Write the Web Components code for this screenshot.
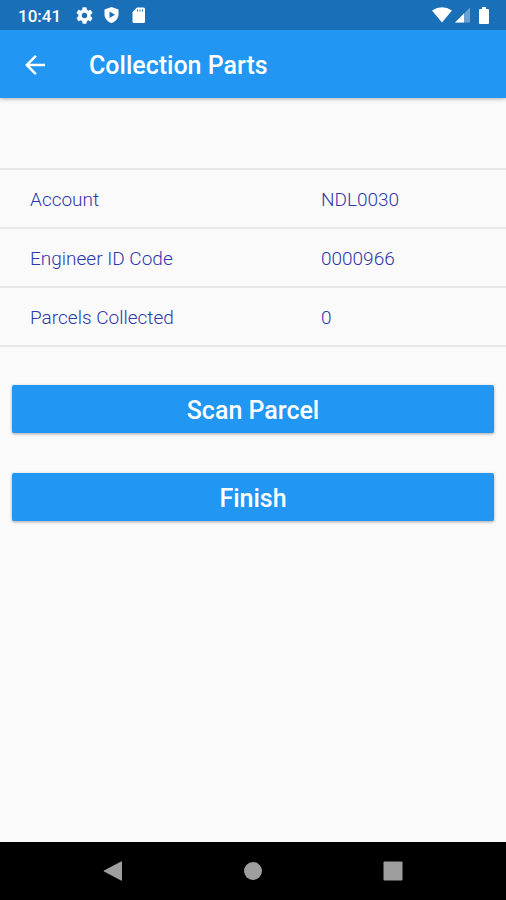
<!DOCTYPE html>
<html lang="en">
<head>
<meta charset="utf-8">
<meta name="viewport" content="width=device-width, initial-scale=1">
<title>Collection Parts</title>
<style>
  html, body { margin: 0; height: 100%; }
  body { font-family: Roboto, "Liberation Sans", sans-serif; background: #fafafa; }
</style>
</head>
<body>
<phone-screen>
  <status-bar slot="top">10:41</status-bar>
  <app-bar slot="top">Collection Parts</app-bar>
  <info-table>
    <span slot="account">NDL0030</span>
    <span slot="engineer">0000966</span>
    <span slot="parcels">0</span>
  </info-table>
  <action-list>
    <action-button>Scan Parcel</action-button>
    <action-button>Finish</action-button>
  </action-list>
  <nav-bar slot="bottom"></nav-bar>
</phone-screen>

<script>
const define = (name, html) => customElements.define(name, class extends HTMLElement {
  constructor() {
    super();
    this.attachShadow({ mode: "open" }).innerHTML = html;
  }
});

define("phone-screen", `
  <style>
    :host { display: flex; flex-direction: column; min-height: 100vh; background: #fafafa; }
    header { position: relative; box-shadow: 0 1px 4px rgba(0,0,0,.3); }
    main { flex: 1; padding-top: 70px; }
  </style>
  <header><slot name="top"></slot></header>
  <main><slot></slot></main>
  <slot name="bottom"></slot>`);

define("status-bar", `
  <style>
    :host { display: flex; align-items: center; justify-content: space-between; height: 30px;
      padding: 0 16px 0 18px; background: #1a70b8; color: #fff; font-size: 17px; font-weight: 500; line-height: 30px; }
    div { display: flex; align-items: center; }
    .left { gap: 10px; }
    .left time { margin-right: 5px; padding-top: 2px; }
    .right { gap: 3px; }
    svg { display: block; fill: currentColor; }
    .battery { margin-left: 4px; }
  </style>
  <div class="left">
    <time><slot></slot></time>
    <svg width="17" height="17" viewBox="2 2 20 20" aria-hidden="true"><path d="M19.14 12.94c.04-.3.06-.61.06-.94s-.02-.64-.07-.94l2.03-1.58a.49.49 0 0 0 .12-.61l-1.92-3.32a.49.49 0 0 0-.59-.22l-2.39.96c-.5-.38-1.03-.7-1.62-.94l-.36-2.54A.48.48 0 0 0 13.92 2.400h-3.84c-.24 0-.43.17-.47.41l-.36 2.54c-.59.24-1.13.57-1.62.94l-2.39-.96a.48.48 0 0 0-.59.22L2.740 8.870a.48.48 0 0 0 .12.61l2.03 1.58c-.05.3-.09.63-.09.94s.02.64.07.94l-2.03 1.58a.49.49 0 0 0-.12.61l1.920 3.320c.12.22.37.29.59.22l2.390-.96c.5.38 1.030.7 1.620.94l.36 2.540c.05.24.24.41.48.41h3.840c.24 0 .44-.17.47-.41l.36-2.540c.59-.24 1.130-.56 1.620-.94l2.390.96c.22.08.47 0 .59-.22l1.920-3.320a.48.48 0 0 0-.12-.61zM12 15.200a3.200 3.200 0 1 1 0-6.400 3.200 3.200 0 0 1 0 6.400z"/></svg>
    <svg width="17" height="18" viewBox="0 0 16 18" aria-hidden="true"><path fill-rule="evenodd" d="M8 1 15 3.500V8.500C15 12.500 12 15.700 8 17 4 15.700 1 12.500 1 8.500V3.500zM6 5.500v6.500L11.500 8.700z"/></svg>
    <svg width="17" height="18" viewBox="0 0 16 18" aria-hidden="true"><path fill-rule="evenodd" d="M6.500 1.500H13Q14.500 1.500 14.500 3V15.500Q14.500 17 13 17H3.500Q2 17 2 15.500V6zM6.500 3.500v2h1v-2zM9 3.500v2h1v-2zM11.500 3.500v2h1v-2z"/></svg>
  </div>
  <div class="right">
    <svg width="20" height="16" viewBox="0 0 20 16" aria-hidden="true"><path d="M0 3.500Q10-3 20 3.500L10 15.500z"/></svg>
    <svg width="16" height="16" viewBox="0 0 16 16" aria-hidden="true"><path opacity=".35" d="M0 15.500 15 0.500V15.500z"/><path d="M0 15.500 9 6.500V15.500z"/></svg>
    <svg class="battery" width="12" height="17" viewBox="0 0 12 17" aria-hidden="true"><path d="M4 0h4v2h2Q11 2 11 3V16Q11 17 10 17H2Q1 17 1 16V3Q1 2 2 2h2z"/></svg>
  </div>`);

define("app-bar", `
  <style>
    :host { display: flex; align-items: center; gap: 30px; height: 68px; padding: 2px 11px 0; box-sizing: border-box;
      background: #2196f3; color: #fff; }
    button { display: grid; place-items: center; width: 48px; height: 48px; padding: 0; border: 0;
      background: none; color: inherit; cursor: pointer; }
    h1 { margin: 0; font-size: 25px; font-weight: 500; line-height: 32px; padding-top: 2px; }
    svg { fill: currentColor; }
  </style>
  <button type="button" aria-label="Back"><svg width="30" height="30" viewBox="0 0 24 24" aria-hidden="true"><path d="M20 11H7.830l5.590-5.590L12 4l-8 8 8 8 1.410-1.410L7.830 13H20z"/></svg></button>
  <h1><slot></slot></h1>`);

define("info-table", `
  <style>
    :host { display: block; color: #2f37ad; font-size: 19px; font-weight: 300; line-height: 24px; }
    table { width: 100%; border-collapse: collapse; table-layout: fixed; border-top: 2px solid #e8e8e8; }
    tr { height: 59px; border-bottom: 2px solid #e8e8e8; }
    th, td { padding: 3px 0 0; font-weight: inherit; text-align: left; }
    th { width: 57.5%; padding-left: 30px; }
  </style>
  <table><tbody>
    <tr><th scope="row">Account</th><td><slot name="account"></slot></td></tr>
    <tr><th scope="row">Engineer ID Code</th><td><slot name="engineer"></slot></td></tr>
    <tr><th scope="row">Parcels Collected</th><td><slot name="parcels"></slot></td></tr>
  </tbody></table>`);

define("action-list", `
  <style>:host { display: flex; flex-direction: column; gap: 40px; padding: 38px 12px; }</style>
  <slot></slot>`);

define("action-button", `
  <style>
    :host { display: block; }
    button { display: block; width: 100%; height: 48px; border: 0; border-radius: 2px; padding: 4px 0 0;
      background: #2196f3; color: #fff; font: 500 25px/32px Roboto, "Liberation Sans", sans-serif;
      box-shadow: 0 1px 3px rgba(0,0,0,.35); cursor: pointer; }
  </style>
  <button type="button"><slot></slot></button>`);

define("nav-bar", `
  <style>
    :host { display: block; background: #000; }
    nav { display: flex; justify-content: center; gap: 92px; height: 58px; align-items: center; }
    button { display: grid; place-items: center; width: 48px; height: 48px; padding: 0; border: 0;
      background: none; color: #9e9e9e; cursor: pointer; }
    svg { fill: currentColor; }
  </style>
  <nav aria-label="System">
    <button type="button" aria-label="Back"><svg width="22" height="22" viewBox="0 0 22 22" aria-hidden="true"><path d="M19 1.500Q20 1 20 2V20Q20 21 19 20.500L2 11.500Q1 11 2 10.500z"/></svg></button>
    <button type="button" aria-label="Home"><svg width="22" height="22" viewBox="0 0 22 22" aria-hidden="true"><circle cx="11" cy="11" r="9"/></svg></button>
    <button type="button" aria-label="Recent apps"><svg width="22" height="22" viewBox="0 0 22 22" aria-hidden="true"><rect x="1.500" y="1.500" width="19" height="19" rx="1"/></svg></button>
  </nav>`);
</script>
</body>
</html>
